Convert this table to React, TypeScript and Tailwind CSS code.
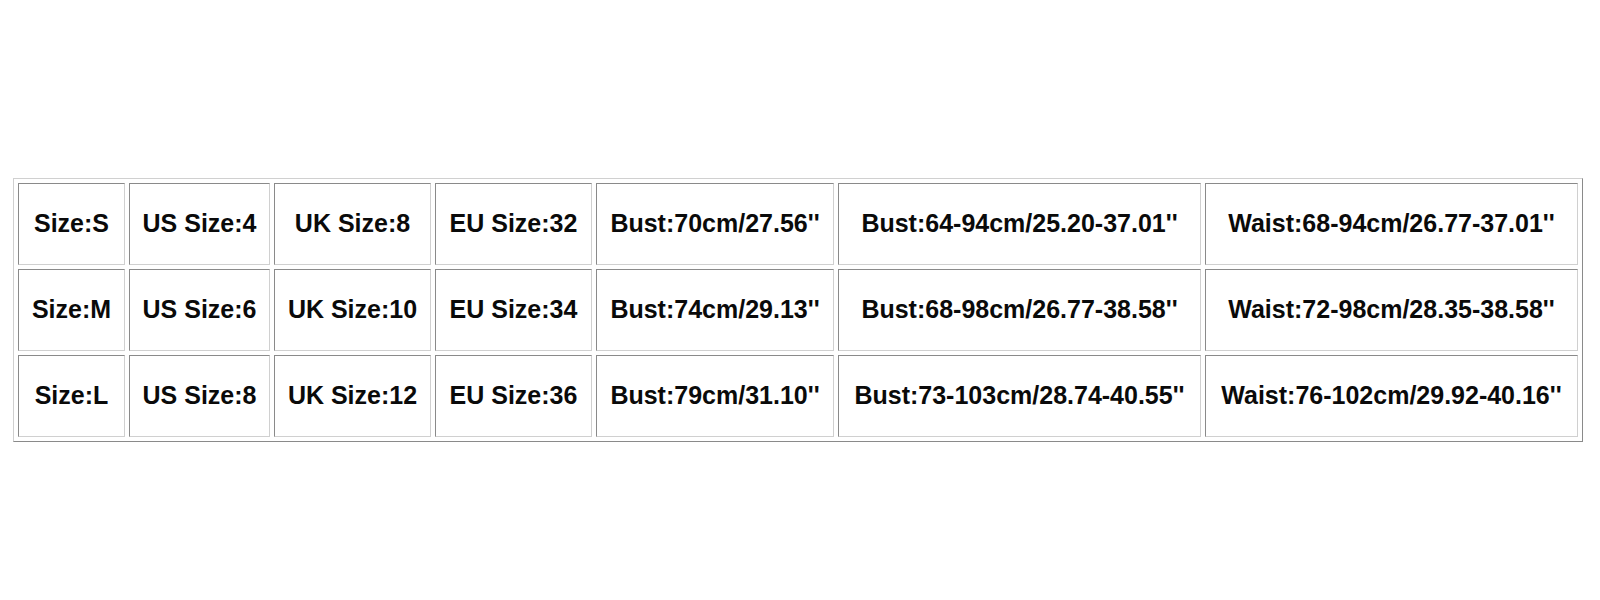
const COLS = ["w-[107px]", "w-[141px]", "w-[157px]", "w-[157px]", "w-[238px]", "w-[363px]", "w-[373px]"];

const ROWS: string[][] = [
  ["Size:S", "US Size:4", "UK Size:8", "EU Size:32", "Bust:70cm/27.56''", "Bust:64-94cm/25.20-37.01''", "Waist:68-94cm/26.77-37.01''"],
  ["Size:M", "US Size:6", "UK Size:10", "EU Size:34", "Bust:74cm/29.13''", "Bust:68-98cm/26.77-38.58''", "Waist:72-98cm/28.35-38.58''"],
  ["Size:L", "US Size:8", "UK Size:12", "EU Size:36", "Bust:79cm/31.10''", "Bust:73-103cm/28.74-40.55''", "Waist:76-102cm/29.92-40.16''"],
];

export default function App() {
  return (
    <div className="h-[600px] w-[1600px] bg-white pl-[13px] pt-[178px]">
      <table className="w-[1570px] table-fixed border-separate border-spacing-[4px] border border-t-[#d0d0d0] border-l-[#d0d0d0] border-b-[#8a8a8a] border-r-[#8a8a8a] font-['Liberation_Sans',Arial,sans-serif] text-[25px] font-bold text-[#0a0a0a]">
        <tbody>
          {ROWS.map((row, r) => (
            <tr key={r}>
              {row.map((cell, c) => (
                <td
                  key={c}
                  className={`${COLS[c]} h-[82px] whitespace-nowrap border border-t-[#8a8a8a] border-l-[#8a8a8a] border-b-[#d0d0d0] border-r-[#d0d0d0] p-0 text-center align-middle`}
                >
                  {cell}
                </td>
              ))}
            </tr>
          ))}
        </tbody>
      </table>
    </div>
  );
}
